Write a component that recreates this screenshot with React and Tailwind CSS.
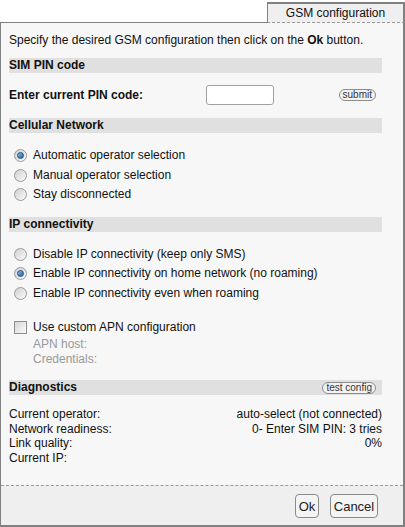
const cellular = [
  ["Automatic operator selection", true],
  ["Manual operator selection", false],
  ["Stay disconnected", false],
];

const ip = [
  ["Disable IP connectivity (keep only SMS)", false],
  ["Enable IP connectivity on home network (no roaming)", true],
  ["Enable IP connectivity even when roaming", false],
];

const diag = [
  ["Current operator:", "auto-select (not connected)"],
  ["Network readiness:", "0- Enter SIM PIN: 3 tries"],
  ["Link quality:", "0%"],
  ["Current IP:", ""],
];

function Radio({ checked }) {
  return (
    <span className="flex h-[13px] w-[13px] items-center justify-center rounded-full border border-[#9a9a9a] bg-gradient-to-br from-[#d0d0d0] to-[#fbfbfb]">
      {checked && (
        <span className="h-[7px] w-[7px] rounded-full border border-[#1b4f7e] bg-gradient-to-br from-[#8cc2ee] to-[#1c5fa0]" />
      )}
    </span>
  );
}

function SectionBar({ title, children }) {
  return (
    <div className="flex h-[15px] items-center justify-between bg-[#e0e0e0] pr-[6px]">
      <span className="font-bold text-[#111]">{title}</span>
      {children}
    </div>
  );
}

function PillButton({ children }) {
  return (
    <button className="flex h-[12px] items-center rounded-full border border-[#8c8c8c] bg-[#f3f3f3] px-[3px] text-[10px] leading-none text-[#333]">
      {children}
    </button>
  );
}

function RadioList({ items }) {
  return (
    <div className="ml-[5px] flex flex-col">
      {items.map(([label, checked]) => (
        <div key={label} className="flex h-[19.5px] items-center gap-[6px]">
          <Radio checked={checked} />
          <span className="text-[#111]">{label}</span>
        </div>
      ))}
    </div>
  );
}

export default function App() {
  return (
    <div className="flex h-[527px] w-[405px] flex-col bg-white font-['Liberation_Sans',Arial,sans-serif] text-[12px] leading-[15px] text-[#111]">
      <div className="flex pt-[2px]">
        <div className="flex-1 border-b border-[#7f7f7f]" />
        <div className="flex h-[21px] w-[138px] items-center justify-center border-b border-l border-r-2 border-t-2 border-[#808080] border-b-[#9a9a9a] bg-[#efefef] text-[12px] [border-bottom-style:dashed]">
          GSM configuration
        </div>
      </div>

      <div className="flex flex-1 flex-col border-b-2 border-l border-r-2 border-[#808080] bg-[#f7f7f7]">
        <div className="flex-1 pl-[8px] pt-[10px]">
          <div className="w-[373px]">
            <p>
              Specify the desired GSM configuration then click on the <b>Ok</b> button.
            </p>

            <div className="mt-[10px]">
              <SectionBar title="SIM PIN code" />
            </div>

            <div className="mt-[12px] flex h-[20px] items-center">
              <span className="w-[197px] font-bold">Enter current PIN code:</span>
              <input className="h-[20px] w-[68px] rounded-[3px] border border-[#a0a0a0] bg-white" />
              <div className="flex flex-1 justify-end pr-[6px]">
                <PillButton>submit</PillButton>
              </div>
            </div>

            <div className="mt-[13px]">
              <SectionBar title="Cellular Network" />
            </div>
            <div className="mt-[13px]">
              <RadioList items={cellular} />
            </div>

            <div className="mt-[12px]">
              <SectionBar title="IP connectivity" />
            </div>
            <div className="mt-[13px]">
              <RadioList items={ip} />
            </div>

            <div className="ml-[5px] mt-[15px] flex h-[19px] items-center gap-[6px]">
              <span className="h-[13px] w-[13px] border border-[#8f8f8f] bg-gradient-to-br from-[#d6d6d6] to-[#fafafa]" />
              <span>Use custom APN configuration</span>
            </div>
            <div className="pl-[24px] text-[#999]">
              <p>APN host:</p>
              <p>Credentials:</p>
            </div>

            <div className="mt-[13px]">
              <SectionBar title="Diagnostics">
                <PillButton>test config</PillButton>
              </SectionBar>
            </div>

            <div className="mt-[12px] flex flex-col leading-[14.7px]">
              {diag.map(([k, v]) => (
                <div key={k} className="flex justify-between">
                  <span>{k}</span>
                  <span>{v}</span>
                </div>
              ))}
            </div>
          </div>
        </div>

        <div className="flex h-[40px] items-start justify-end gap-[11px] border-t border-dashed border-[#9a9a9a] bg-[#efefef] pr-[25px] pt-[8px]">
          <button className="h-[24px] w-[24px] rounded-[4px] border border-[#8a8a8a] bg-[#f4f4f4] text-[13px] text-[#222]">
            Ok
          </button>
          <button className="h-[24px] w-[48px] rounded-[4px] border border-[#8a8a8a] bg-[#f4f4f4] text-[13px] text-[#222]">
            Cancel
          </button>
        </div>
      </div>
    </div>
  );
}
